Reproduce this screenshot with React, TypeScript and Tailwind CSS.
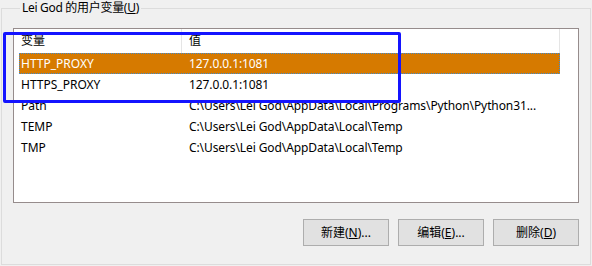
import React from 'react'

const font = { fontFamily: '"Segoe UI", "Noto Sans", "Noto Sans CJK SC", sans-serif' }

interface EnvVar {
  name: string
  value: string
}

const vars: EnvVar[] = [
  { name: 'HTTP_PROXY', value: '127.0.0.1:1081' },
  { name: 'HTTPS_PROXY', value: '127.0.0.1:1081' },
  { name: 'Path', value: 'C:\\Users\\Lei God\\AppData\\Local\\Programs\\Python\\Python31...' },
  { name: 'TEMP', value: 'C:\\Users\\Lei God\\AppData\\Local\\Temp' },
  { name: 'TMP', value: 'C:\\Users\\Lei God\\AppData\\Local\\Temp' },
]

function WinButton({ label, mnemonic, suffix }: { label: string; mnemonic: string; suffix: string }) {
  return (
    <button className="w-[86px] h-[27px] bg-[#e1e1e1] border border-[#adadad] text-[12px] text-black flex items-center justify-center">
      {label}(<span className="underline">{mnemonic}</span>){suffix}
    </button>
  )
}

export default function App() {
  const selected = 0

  return (
    <div className="relative w-[592px] h-[266px] bg-[#f0f0f0] overflow-hidden" style={font}>
      <fieldset className="ml-[1px] w-[590px] h-[265px] border border-[#dcdcdc] px-[11px]">
        <legend className="ml-[7px] px-[2px] text-[12px] leading-[16px] text-black tracking-[-0.3px]">
          Lei God 的用户变量(<span className="underline">U</span>)
        </legend>

        {/* list view */}
        <div className="mt-[12px] w-[566px] h-[175px] bg-white border border-[#968c8c] text-[12px]">
          <div className="flex h-[24px] items-center">
            <div className="w-[168px] h-full pl-[7px] flex items-center border-r border-[#e5e5e5]">变量</div>
            <div className="w-[378px] h-full pl-[7px] flex items-center border-r border-[#e5e5e5]">值</div>
          </div>
          <div className="px-[5px]">
            {vars.map((v, i) => (
              <div
                key={v.name}
                className={`flex h-[21px] w-[541px] items-center ${
                  i === selected ? 'bg-[#d67a00] text-white outline-1 outline-dotted outline-offset-[-1px] outline-[#3c8cd8]' : 'text-black'
                }`}
              >
                <div className="w-[169px] pl-[2px] truncate">{v.name}</div>
                <div className="flex-1 pl-[1px] whitespace-nowrap tracking-[-0.1px]">{v.value}</div>
              </div>
            ))}
          </div>
        </div>

        <div className="mt-[16px] flex justify-end gap-[9px]">
          <WinButton label="新建" mnemonic="N" suffix="..." />
          <WinButton label="编辑" mnemonic="E" suffix="..." />
          <WinButton label="删除" mnemonic="D" suffix="" />
        </div>
      </fieldset>

      {/* annotation */}
      <div className="absolute left-[3px] top-[32px] w-[398px] h-[71px] border-[3px] border-[#1414ff] rounded-[2px]" />
    </div>
  )
}
